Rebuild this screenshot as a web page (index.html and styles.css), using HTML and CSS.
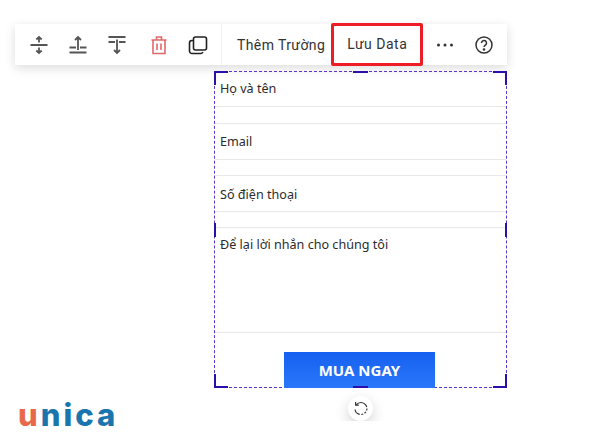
FILE: index.html
```html
<!DOCTYPE html>
<html lang="vi">
  <head>
    <title>Form editor</title>
    <meta charset="UTF-8" />
    <link rel="stylesheet" href="styles.css">
  </head>
  <body>
    <div class="editor">
      <div class="toolbar">
        <span class="toolbar__icon">
          <svg width="26" height="26" viewBox="0 0 26 26" fill="none" stroke="#555" stroke-width="1.800">
            <path d="M4.500 13h17M13 5v5.500M10.300 7.500L13 5l2.700 2.500M13 21v-5.500M10.300 18.500L13 21l2.700-2.500"/>
          </svg>
        </span>
        <span class="toolbar__icon">
          <svg width="26" height="26" viewBox="0 0 26 26" fill="none" stroke="#555" stroke-width="1.800">
            <path d="M4.500 15.500h6.500M15 15.500h6.500M4.500 20.500h17M13 18V5M10 8l3-3 3 3"/>
          </svg>
        </span>
        <span class="toolbar__icon">
          <svg width="26" height="26" viewBox="0 0 26 26" fill="none" stroke="#555" stroke-width="1.800">
            <path d="M4.500 5h17M4.500 10h6.500M15 10h6.500M13 7.500V21M10 18l3 3 3-3"/>
          </svg>
        </span>
        <span class="toolbar__icon toolbar__icon--trash">
          <svg width="26" height="26" viewBox="0 0 26 26" fill="none" stroke="#e0696b" stroke-width="1.600">
            <path d="M5.500 8h15M10.500 8V5h5v3M7 8v13.500h12V8M11 11.500v6.500M15 11.500v6.500"/>
          </svg>
        </span>
        <span class="toolbar__icon">
          <svg width="26" height="26" viewBox="0 0 26 26" fill="none" stroke="#222" stroke-width="1.600">
            <rect x="8.500" y="5" width="13" height="13" rx="2"/>
            <path d="M8 8.500H7a2.500 2.500 0 0 0-2.500 2.500v8A2.500 2.500 0 0 0 7 21.500h9a2.500 2.500 0 0 0 2-1.500"/>
          </svg>
        </span>
        <div class="toolbar__divider"></div>
        <span class="toolbar__add">Thêm Trường</span>
        <span class="toolbar__save">Lưu Data</span>
        <span class="toolbar__more">
          <svg width="18" height="4" viewBox="0 0 18 4" fill="#333">
            <circle cx="2.500" cy="2" r="1.500"/><circle cx="9" cy="2" r="1.500"/><circle cx="15.500" cy="2" r="1.500"/>
          </svg>
        </span>
        <span class="toolbar__help">
          <svg width="20" height="20" viewBox="0 0 20 20" fill="none" stroke="#333" stroke-width="1.500">
            <circle cx="10" cy="10" r="8"/>
            <path d="M7.500 8a2.500 2.500 0 1 1 3.800 2.100c-.9.600-1.300 1-1.300 2"/>
            <circle cx="10" cy="14.500" r=".6" fill="#333"/>
          </svg>
        </span>
      </div>

      <div class="form">
        <div class="form__field">Họ và tên</div>
        <div class="form__field">Email</div>
        <div class="form__field form__field--phone">Số điện thoại</div>
        <div class="form__field form__field--area">Để lại lời nhắn cho chúng tôi</div>
        <div class="form__button">MUA NGAY</div>

        <span class="corner corner--tl"></span>
        <span class="corner corner--tr"></span>
        <span class="corner corner--bl"></span>
        <span class="corner corner--br"></span>
        <span class="handle handle--top"></span>
        <span class="handle handle--bottom"></span>
        <span class="handle handle--left"></span>
        <span class="handle handle--right"></span>
      </div>

      <div class="rotate">
        <svg width="16" height="16" viewBox="0 0 16 16" fill="none" stroke="#333" stroke-width="1.200">
          <path d="M3.200 3.800A6 6 0 1 1 2 8.500" stroke-dasharray="13 1.500 2 1.500 2 1.500 2 1.500"/>
          <path d="M2.600 1v3.200h3.200"/>
        </svg>
      </div>
    </div>

    <div class="logo"><span class="logo__u">u</span>nica</div>
  </body>
</html>
```

FILE: styles.css
```css
body {
  margin: 0;
  font-family: 'Noto Sans', Arial, sans-serif;
  background: #ffffff;
}

.editor {
  width: 492px;
  padding: 24px 0 0 15px;
}

.toolbar {
  display: flex;
  align-items: center;
  height: 41px;
  padding-left: 4px;
  background: #ffffff;
  box-shadow: 0 3px 10px rgba(0, 0, 0, 0.14);
  font-family: 'Roboto', Arial, sans-serif;
  font-size: 14px;
  color: #333333;
}

.toolbar__icon {
  display: flex;
  justify-content: center;
  width: 39px;
}

.toolbar__icon--trash {
  margin-left: 3px;
}

.toolbar__divider {
  width: 1px;
  height: 41px;
  margin-left: 4px;
  background: #f0f0f0;
}

.toolbar__add {
  margin-left: 15px;
  letter-spacing: 0.4px;
}

.toolbar__save {
  box-sizing: border-box;
  width: 92px;
  height: 43px;
  margin-left: 6px;
  border: 3px solid #ee1c25;
  border-radius: 2px;
  line-height: 37px;
  text-align: center;
  letter-spacing: 0.5px;
}

.toolbar__more {
  display: flex;
  margin-left: 13px;
}

.toolbar__help {
  display: flex;
  margin-left: 20px;
}

.form {
  position: relative;
  box-sizing: border-box;
  width: 293px;
  height: 317px;
  margin: 6px 0 0 199px;
  border: 1px dashed #5a36c8;
  font-size: 12.6px;
  color: #2b2b2b;
}

.form__field {
  box-sizing: border-box;
  height: 37px;
  margin-bottom: 15px;
  padding: 9px 5px 0;
  border-bottom: 1px solid #e8e8e8;
  line-height: 18px;
}

.form__field + .form__field {
  border-top: 1px solid #e8e8e8;
}

.form__field:first-child {
  height: 35px;
  margin-bottom: 16px;
  padding-top: 8px;
}

.form__field--phone {
  padding-top: 10px;
}

.form__field--area {
  height: 106px;
  margin-bottom: 19px;
  padding-top: 8px;
}

.form__button {
  width: 151px;
  height: 36px;
  margin-left: 69px;
  background: linear-gradient(#1560f0, #2b78fa);
  font-size: 15px;
  font-weight: 700;
  line-height: 36px;
  text-align: center;
  color: #ffffff;
}

.corner {
  position: absolute;
  width: 12px;
  height: 12px;
  border: 0 solid #2c0fa8;
}

.corner--tl {
  top: -1px;
  left: -1px;
  border-width: 2px 0 0 2px;
}

.corner--tr {
  top: -1px;
  right: -1px;
  border-width: 2px 2px 0 0;
}

.corner--bl {
  bottom: -1px;
  left: -1px;
  border-width: 0 0 2px 2px;
}

.corner--br {
  bottom: -1px;
  right: -1px;
  border-width: 0 2px 2px 0;
}

.handle {
  position: absolute;
  background: #2c0fa8;
}

.handle--top,
.handle--bottom {
  left: 138px;
  width: 15px;
  height: 2px;
}

.handle--top {
  top: -1px;
}

.handle--bottom {
  bottom: -1px;
}

.handle--left,
.handle--right {
  top: 151px;
  width: 2px;
  height: 14px;
}

.handle--left {
  left: -1px;
}

.handle--right {
  right: -1px;
}

.rotate {
  display: flex;
  align-items: center;
  justify-content: center;
  width: 25px;
  height: 25px;
  margin: 8px 0 0 333px;
  border-radius: 50%;
  background: #ffffff;
  box-shadow: 0 5px 14px rgba(0, 0, 0, 0.18);
}

.logo {
  position: absolute;
  left: 18px;
  top: 396px;
  font-family: 'Inter', Arial, sans-serif;
  font-size: 31px;
  font-weight: 800;
  letter-spacing: 3px;
  color: #1b75ad;
}

.logo__u {
  color: #e8694a;
}
```
